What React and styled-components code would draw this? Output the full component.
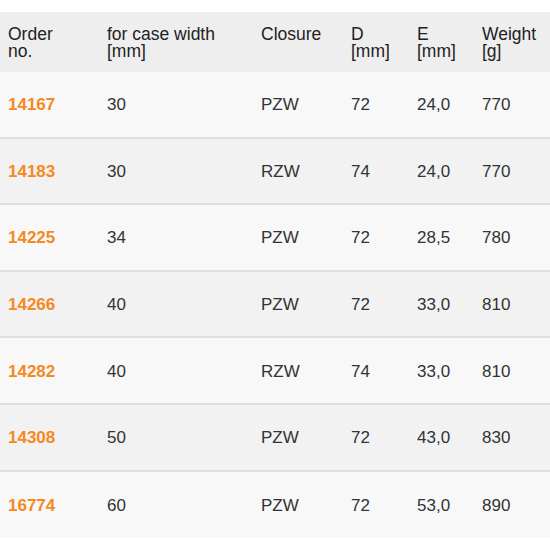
import React from "react";
import styled, { createGlobalStyle } from "styled-components";

const rows = [
  { order: "14167", width: "30", closure: "PZW", d: "72", e: "24,0", weight: "770" },
  { order: "14183", width: "30", closure: "RZW", d: "74", e: "24,0", weight: "770" },
  { order: "14225", width: "34", closure: "PZW", d: "72", e: "28,5", weight: "780" },
  { order: "14266", width: "40", closure: "PZW", d: "72", e: "33,0", weight: "810" },
  { order: "14282", width: "40", closure: "RZW", d: "74", e: "33,0", weight: "810" },
  { order: "14308", width: "50", closure: "PZW", d: "72", e: "43,0", weight: "830" },
  { order: "16774", width: "60", closure: "PZW", d: "72", e: "53,0", weight: "890" },
];

const GlobalStyle = createGlobalStyle`
  html, body {
    margin: 0;
    padding: 0;
    background: #ffffff;
  }
  body {
    font-family: "Liberation Sans", Arial, Helvetica, sans-serif;
    color: #333333;
  }
`;

const App = () => {
  return (
    <>
      <GlobalStyle />
      <Wrapper>
        <HeadRow>
          <HeadCell>Order<br />no.</HeadCell>
          <HeadCell>for case width<br />[mm]</HeadCell>
          <HeadCell>Closure</HeadCell>
          <HeadCell>D<br />[mm]</HeadCell>
          <HeadCell>E<br />[mm]</HeadCell>
          <HeadCell>Weight<br />[g]</HeadCell>
        </HeadRow>
        {rows.map((row, i) => (
          <Row key={row.order} $even={i % 2 === 1} $last={i === rows.length - 1}>
            <OrderCell>{row.order}</OrderCell>
            <Cell>{row.width}</Cell>
            <Cell>{row.closure}</Cell>
            <Cell>{row.d}</Cell>
            <Cell>{row.e}</Cell>
            <Cell>{row.weight}</Cell>
          </Row>
        ))}
      </Wrapper>
    </>
  );
};

export default App;

const columns = "99px 154px 90px 66px 65px 1fr";

const Wrapper = styled.section`
  margin-top: 12px;
  width: 550px;
  font-size: 17px;
`;

const HeadRow = styled.div`
  display: grid;
  grid-template-columns: ${columns};
  align-items: start;
  box-sizing: border-box;
  height: 60px;
  padding-top: 14px;
  background-color: #eeeeee;
`;

const HeadCell = styled.div`
  padding-left: 8px;
  font-size: 17.5px;
  line-height: 17px;
  color: #222222;
`;

const Row = styled.div`
  display: grid;
  grid-template-columns: ${columns};
  align-items: center;
  box-sizing: border-box;
  height: 66.6px;
  background-color: ${(p) => (p.$even ? "#f2f2f2" : "#f8f8f8")};
  border-bottom: ${(p) => (p.$last ? "none" : "2px solid #e0e0e0")};
`;

const Cell = styled.div`
  padding-left: 8px;
  padding-top: 1px;
  line-height: 17px;
  color: #333333;
`;

const OrderCell = styled(Cell)`
  color: #f5891e;
  font-weight: bold;
`;
